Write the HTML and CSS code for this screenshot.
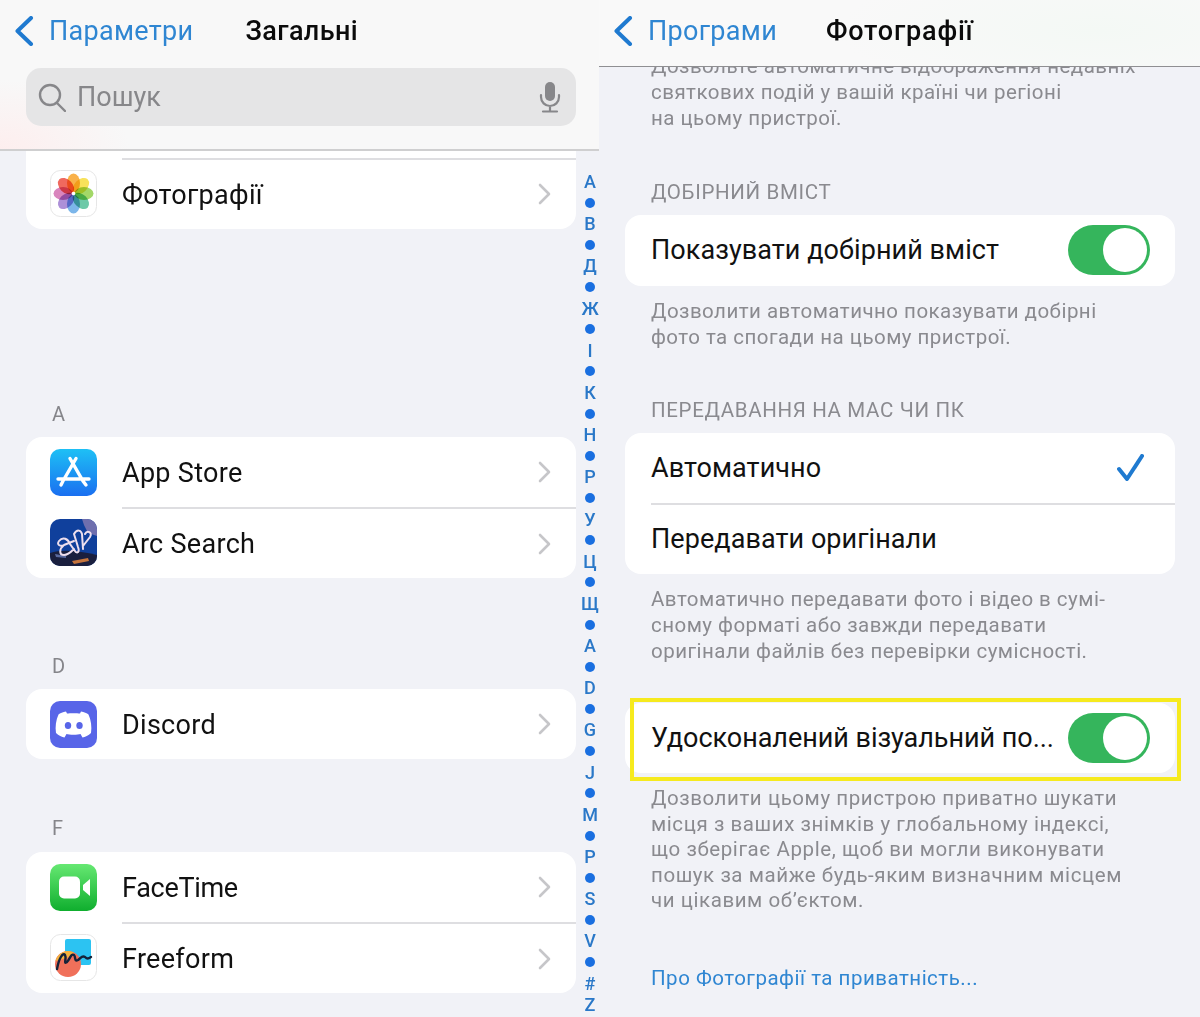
FILE: index.html
```html
<!DOCTYPE html>
<html>

<head>
    <title>Параметри</title>
    <meta charset="utf-8">
    <meta name="viewport" content="width=device-width, initial-scale=1.0">
    <link rel="stylesheet" href="styles.css">
</head>

<body>
    <section class="panel panel-left">
        <header class="top top-left">
            <div class="nav">
                <svg class="back" width="20" height="30" viewBox="0 0 20 30"><path d="M17 2 L3.500 15 L17 28" /></svg>
                <span class="back-text">Параметри</span>
                <span class="title title-left">Загальні</span>
            </div>
            <div class="search">
                <svg width="28" height="30" viewBox="0 0 28 30" class="search-icon"><circle cx="12" cy="13" r="10" /><path d="M19 21 L27 29" /></svg>
                <span class="search-text">Пошук</span>
                <svg width="22" height="32" viewBox="0 0 22 32" class="mic"><rect x="6" y="1" width="10" height="19" rx="5" class="mic-body" /><path d="M2 14 V16 A9 9 0 0 0 20 16 V14 M11 25 V30 M4 30.500 H18" /></svg>
            </div>
        </header>

        <div class="list">
            <div class="card card-first">
                <div class="row">
                    <svg class="icon" viewBox="0 0 47 47">
                        <rect x=".5" y=".5" width="46" height="46" rx="10" fill="#fff" stroke="#e6e6e6" />
                        <g class="petals">
                            <ellipse cx="23.500" cy="13" rx="6.500" ry="9.500" fill="#f9b14a" />
                            <ellipse cx="23.500" cy="13" rx="6.500" ry="9.500" fill="#f8e25a" transform="rotate(45 23.500 23.500)" />
                            <ellipse cx="23.500" cy="13" rx="6.500" ry="9.500" fill="#a3d868" transform="rotate(90 23.500 23.500)" />
                            <ellipse cx="23.500" cy="13" rx="6.500" ry="9.500" fill="#6ec9a8" transform="rotate(135 23.500 23.500)" />
                            <ellipse cx="23.500" cy="13" rx="6.500" ry="9.500" fill="#7cb6ea" transform="rotate(180 23.500 23.500)" />
                            <ellipse cx="23.500" cy="13" rx="6.500" ry="9.500" fill="#ad90d8" transform="rotate(225 23.500 23.500)" />
                            <ellipse cx="23.500" cy="13" rx="6.500" ry="9.500" fill="#d985bd" transform="rotate(270 23.500 23.500)" />
                            <ellipse cx="23.500" cy="13" rx="6.500" ry="9.500" fill="#f0695e" transform="rotate(315 23.500 23.500)" />
                        </g>
                        <circle cx="23.500" cy="23.500" r="1.800" fill="#fff" />
                    </svg>
                    <div class="row-body row-line">
                        <span>Фотографії</span>
                        <svg class="chev" width="14" height="22" viewBox="0 0 14 22"><path d="M3 2 L12 11 L3 20" /></svg>
                    </div>
                </div>
            </div>

            <h5 class="letter letter-a">A</h5>
            <div class="card">
                <div class="row">
                    <svg class="icon" viewBox="0 0 47 47">
                        <defs><linearGradient id="blue" x1="0" y1="0" x2="0" y2="1"><stop offset="0" stop-color="#1ec0f5" /><stop offset="1" stop-color="#1a6ff0" /></linearGradient></defs>
                        <rect width="47" height="47" rx="10" fill="url(#blue)" />
                        <path d="M26 9.500 L13 32 L11 36 M20 9.500 L33 32 L36 36 M8 30 H39" fill="none" stroke="#fff" stroke-width="3.400" stroke-linecap="round" />
                    </svg>
                    <div class="row-body">
                        <span>App Store</span>
                        <svg class="chev" width="14" height="22" viewBox="0 0 14 22"><path d="M3 2 L12 11 L3 20" /></svg>
                    </div>
                </div>
                <div class="row row-tall">
                    <svg class="icon" viewBox="0 0 47 47">
                        <rect width="47" height="47" rx="10" fill="#10409c" />
                        <path d="M0 34 C12 30 30 32 47 36 V37 A10 10 0 0 1 37 47 H10 A10 10 0 0 1 0 37 Z" fill="#1a1f3e" />
                        <path d="M32 0 H37 A10 10 0 0 1 47 10 V17 L38 14 L34 6 Z" fill="#6f6fae" />
                        <path d="M22 42 L38 39 L39 42 L24 45 Z" fill="#c5743c" />
                        <path d="M5 35 L16 37 L16 39 L6 38 Z" fill="#5a6aa0" />
                        <path d="M9 22 C13 17 18 20 20 25 L25 32 C27 35 30 33 28 28 L24 15 C27 10 31 11 32 15 L33 30 M33 27 L40 18 C43 13 37 11 35 15 M9 22 C6 26 11 28 14 26 L24 22 M14 26 C9 30 9 36 14 36 C18 36 21 33 24 30" fill="none" stroke="#eedfee" stroke-width="2" stroke-linecap="round" />
                    </svg>
                    <div class="row-body row-line">
                        <span>Arc Search</span>
                        <svg class="chev" width="14" height="22" viewBox="0 0 14 22"><path d="M3 2 L12 11 L3 20" /></svg>
                    </div>
                </div>
            </div>

            <h5 class="letter letter-d">D</h5>
            <div class="card">
                <div class="row">
                    <svg class="icon" viewBox="0 0 47 47">
                        <rect width="47" height="47" rx="10" fill="#5865e8" />
                        <path d="M16 10.500 C13 11 10 12.200 8.500 13.500 C6 19 5 26 6 32 C8.500 34.500 12 36 14.500 36.500 L16.500 33 C19 34 28 34 30.500 33 L32.500 36.500 C35 36 38.500 34.500 41 32 C42 26 41 19 38.500 13.500 C37 12.200 34 11 31 10.500 L30 12.500 C27 12 20 12 17 12.500 Z" fill="#fff" />
                        <ellipse cx="18" cy="24.500" rx="3.200" ry="3.600" fill="#5865e8" />
                        <ellipse cx="29.500" cy="24.500" rx="3.200" ry="3.600" fill="#5865e8" />
                    </svg>
                    <div class="row-body">
                        <span>Discord</span>
                        <svg class="chev" width="14" height="22" viewBox="0 0 14 22"><path d="M3 2 L12 11 L3 20" /></svg>
                    </div>
                </div>
            </div>

            <h5 class="letter letter-f">F</h5>
            <div class="card">
                <div class="row">
                    <svg class="icon" viewBox="0 0 47 47">
                        <defs><linearGradient id="green" x1="0" y1="0" x2="0" y2="1"><stop offset="0" stop-color="#66e872" /><stop offset="1" stop-color="#0fae2e" /></linearGradient></defs>
                        <rect width="47" height="47" rx="10" fill="url(#green)" />
                        <rect x="9" y="12.500" width="21" height="22" rx="5" fill="#fff" />
                        <path d="M33 21 L40 15 V32 L33 26 Z" fill="#fff" />
                    </svg>
                    <div class="row-body">
                        <span class="tight">FaceTime</span>
                        <svg class="chev" width="14" height="22" viewBox="0 0 14 22"><path d="M3 2 L12 11 L3 20" /></svg>
                    </div>
                </div>
                <div class="row row-tall">
                    <svg class="icon" viewBox="0 0 47 47">
                        <rect x=".5" y=".5" width="46" height="46" rx="10" fill="#fff" stroke="#e6e6e6" />
                        <rect x="15" y="5" width="26" height="26" rx="2" fill="#2cc3f2" />
                        <circle cx="18" cy="30" r="13" fill="#f0705a" />
                        <path d="M5.500 27 A13 13 0 0 1 24 18.500 L17 24 Z" fill="#f3b340" />
                        <path d="M7 35 C9 24 13 18 15 21 C17 24 13 31 17 28 C20 25 21 19 24 21 C26 23 24 28 28 26 C31 24 32 21 35 23 C37 25 38 25 41 23" fill="none" stroke="#15233a" stroke-width="2.400" stroke-linecap="round" />
                    </svg>
                    <div class="row-body row-line">
                        <span>Freeform</span>
                        <svg class="chev" width="14" height="22" viewBox="0 0 14 22"><path d="M3 2 L12 11 L3 20" /></svg>
                    </div>
                </div>
            </div>
        </div>

        <div class="index">
            <span>A</span><i></i><span>B</span><i></i><span>Д</span><i></i><span>Ж</span><i></i><span>І</span><i></i><span>К</span><i></i><span>Н</span><i></i><span>Р</span><i></i><span>У</span><i></i><span>Ц</span><i></i><span>Щ</span><i></i><span>A</span><i></i><span>D</span><i></i><span>G</span><i></i><span>J</span><i></i><span>M</span><i></i><span>P</span><i></i><span>S</span><i></i><span>V</span><i></i><span>#</span><span>Z</span>
        </div>
    </section>

    <section class="panel panel-right">
        <header class="top top-right">
            <div class="nav">
                <svg class="back" width="20" height="30" viewBox="0 0 20 30"><path d="M17 2 L3.500 15 L17 28" /></svg>
                <span class="back-text">Програми</span>
                <span class="title title-right">Фотографії</span>
            </div>
        </header>

        <div class="settings">
            <p class="note note-first">Дозвольте автоматичне відображення недавніх<br>святкових подій у вашій країні чи регіоні<br>на цьому пристрої.</p>

            <h6 class="group">ДОБІРНИЙ ВМІСТ</h6>
            <div class="card card-right">
                <div class="set-row">
                    <span>Показувати добірний вміст</span>
                    <span class="toggle"></span>
                </div>
            </div>
            <p class="note">Дозволити автоматично показувати добірні<br>фото та спогади на цьому пристрої.</p>

            <h6 class="group group-two">ПЕРЕДАВАННЯ НА МАС ЧИ ПК</h6>
            <div class="card card-right">
                <div class="set-row">
                    <span>Автоматично</span>
                    <svg class="check" width="27" height="27" viewBox="0 0 27 27"><path d="M2 15 L10 25 L25 2" /></svg>
                </div>
                <div class="set-row set-line">
                    <span>Передавати оригінали</span>
                </div>
            </div>
            <p class="note">Автоматично передавати фото і відео в сумі-<br>сному форматі або завжди передавати<br>оригінали файлів без перевірки сумісності.</p>

            <div class="card card-right card-marked">
                <div class="set-row">
                    <span class="tight-long">Удосконалений візуальний по...</span>
                    <span class="toggle"></span>
                </div>
                <div class="marker"></div>
            </div>
            <p class="note note-last">Дозволити цьому пристрою приватно шукати<br>місця з ваших знімків у глобальному індексі,<br>що зберігає Apple, щоб ви могли виконувати<br>пошук за майже будь-яким визначним місцем<br>чи цікавим об’єктом.</p>

            <a class="link">Про Фотографії та приватність...</a>
        </div>
    </section>
</body>

</html>
```

FILE: styles.css
```css
* {
    box-sizing: border-box;
}

html,
body {
    margin: 0;
    padding: 0;
}

body {
    display: flex;
    width: 1200px;
    height: 1017px;
    overflow: hidden;
    background-color: #f1f2f7;
    font-family: 'Roboto', 'Liberation Sans', sans-serif;
    color: #111;
}

.panel {
    position: relative;
    height: 1017px;
    overflow: hidden;
}

.panel-left {
    width: 599px;
}

.panel-right {
    width: 601px;
}

/* top bars */
.top {
    position: relative;
    z-index: 2;
    background-color: #f8f8f8;
}

.top-left {
    height: 151px;
    border-bottom: 2px solid #cfcfd0;
    background: radial-gradient(ellipse 130px 70px at 0 150px, #fdeeee, #f8f8f8);
}

.top-right {
    height: 67px;
    border-bottom: 1px solid #8f8f92;
    background: radial-gradient(ellipse 260px 70px at 500px 30px, #f4f9f5, #f9f9f9);
}

.nav {
    display: flex;
    align-items: center;
    height: 62px;
    padding-left: 14px;
}

.back {
    flex: none;
}

.back path {
    fill: none;
    stroke: #1f7ad0;
    stroke-width: 4;
    stroke-linecap: round;
    stroke-linejoin: round;
}

.back-text {
    margin-left: 15px;
    font-size: 27px;
    letter-spacing: .3px;
    color: #2f86d2;
}

.title {
    font-size: 27px;
    font-weight: 500;
    color: #0b0b0b;
}

.title-left {
    margin-left: 52px;
    letter-spacing: .4px;
}

.title-right {
    margin-left: 49px;
    letter-spacing: .8px;
}

.search {
    display: flex;
    align-items: center;
    height: 58px;
    margin: 6px 23px 0 26px;
    padding: 0 15px 0 12px;
    border-radius: 15px;
    background-color: #e5e5e6;
}

.search-icon circle,
.search-icon path {
    fill: none;
    stroke: #87878a;
    stroke-width: 2.4;
    stroke-linecap: round;
}

.search-text {
    margin-left: 11px;
    font-size: 27px;
    color: #87878a;
}

.mic {
    margin-left: auto;
}

.mic path {
    fill: none;
    stroke: #87878a;
    stroke-width: 2.2;
    stroke-linecap: round;
}

.mic-body {
    fill: #87878a;
}

/* app list */
.list {
    padding: 0 23px 0 26px;
}

.card {
    border-radius: 16px;
    background-color: #fff;
}

.card-first {
    height: 78px;
    padding-top: 7px;
    border-radius: 0 0 16px 16px;
}

.row {
    display: flex;
    align-items: center;
    height: 70px;
    padding-left: 24px;
}

.row-tall {
    height: 71px;
}

.icon {
    flex: none;
    width: 47px;
    height: 47px;
}

.petals ellipse {
    mix-blend-mode: multiply;
}

.row-body {
    display: flex;
    flex: 1;
    align-items: center;
    justify-content: space-between;
    align-self: stretch;
    margin-left: 25px;
    padding-right: 25px;
    font-size: 27px;
    letter-spacing: .3px;
}

.row-body span {
    margin-top: 2px;
}

.row-tall .row-body span {
    margin-top: 0;
}

.row-body .tight {
    letter-spacing: -.3px;
}

.row-line {
    border-top: 2px solid #dedee1;
}

.chev path {
    fill: none;
    stroke: #c6c6c9;
    stroke-width: 2.6;
    stroke-linecap: round;
    stroke-linejoin: round;
}

.letter {
    margin: 0 0 11px 26px;
    font-size: 20px;
    line-height: 24px;
    font-weight: 400;
    color: #85858a;
}

.letter-a {
    margin-top: 173px;
}

.letter-d {
    margin-top: 76px;
}

.letter-f {
    margin-top: 57px;
    margin-bottom: 12px;
}

/* letter index on the right edge */
.index {
    position: absolute;
    z-index: 1;
    top: 171px;
    left: 576px;
    width: 28px;
    display: flex;
    flex-direction: column;
    align-items: center;
    font-size: 18px;
    font-weight: 500;
    color: #2a78c8;
}

.index span {
    height: 21.200px;
    line-height: 21.200px;
}

.index i {
    flex: none;
    width: 10px;
    height: 10px;
    margin: 5.500px 0;
    border-radius: 50%;
    background-color: #1a6fe0;
}

/* photos settings */
.settings {
    height: 950px;
    overflow: hidden;
    padding: 0 25px 0 26px;
}

.note {
    margin: 12px 0 0 26px;
    font-size: 20.500px;
    line-height: 26px;
    letter-spacing: .47px;
    color: #8a8a8f;
}

.note-first {
    margin-top: -14px;
}

.note-last {
    margin-top: 13px;
    line-height: 25.500px;
    letter-spacing: .57px;
}

.group {
    margin: 48px 0 10px 26px;
    font-size: 20.500px;
    line-height: 26px;
    font-weight: 400;
    letter-spacing: .65px;
    color: #8a8a8f;
}

.group-two {
    margin-top: 47px;
}

.card-right {
    position: relative;
}

.card-marked {
    margin-top: 39px;
}

.set-row {
    display: flex;
    align-items: center;
    justify-content: space-between;
    height: 70.500px;
    margin-left: 26px;
    padding-right: 25px;
    font-size: 27px;
    letter-spacing: .06px;
}

.set-row .tight-long {
    letter-spacing: -.04px;
}

.set-line {
    border-top: 2px solid #dedee1;
}

.toggle {
    position: relative;
    flex: none;
    width: 82px;
    height: 50px;
    border-radius: 25px;
    background-color: #35b55c;
}

.toggle::after {
    content: "";
    position: absolute;
    top: 3px;
    right: 3px;
    width: 44px;
    height: 44px;
    border-radius: 50%;
    background-color: #fff;
}

.check {
    margin-right: 6px;
}

.check path {
    fill: none;
    stroke: #1f7ad0;
    stroke-width: 4;
    stroke-linecap: round;
    stroke-linejoin: round;
}

.marker {
    position: absolute;
    top: -5px;
    left: 5px;
    right: -6px;
    bottom: -8px;
    border: 4px solid #f6ea1e;
}

.link {
    display: block;
    margin: 51px 0 0 26px;
    font-size: 20.500px;
    line-height: 26px;
    letter-spacing: .5px;
    color: #2f86d2;
}
```
